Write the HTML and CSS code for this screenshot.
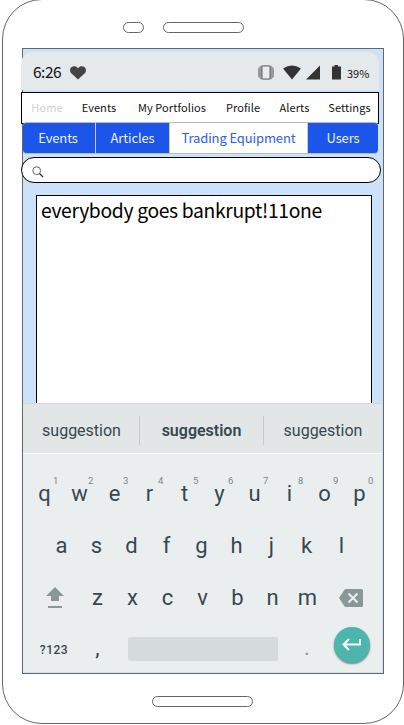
FILE: index.html
```html
<!DOCTYPE html>
<html lang="en">
<head>
<meta charset="utf-8">
<title>Trading Equipment</title>
<link rel="stylesheet" href="styles.css">
</head>
<body>
<div class="phone">
  <div class="phone-top"><span class="camera"></span><span class="speaker"></span></div>
  <main class="screen">
    <header class="status">
      <span class="clock">6:26</span>
      <svg class="heart" width="16" height="14" viewBox="0 0 16 14"><path fill="#444" d="M8 13.500 1.500 7.600C-.5 5.500-.2 2.500 1.300 1.200 3.200-.4 6.300-.2 8 2.200 9.700-.2 12.800-.4 14.700 1.200 16.200 2.500 16.500 5.500 14.500 7.600Z"/></svg>
      <svg class="icons" width="90" height="18" viewBox="0 0 90 18">
        <path fill="#999" d="M3 1.500h10l3 3v8l-3 3H3l-3-3v-8Z"/>
        <rect x="4" y="2" width="8" height="13" rx="1" fill="#e9ecee" stroke="#666"/>
        <path fill="#333" d="M25 4.500Q34 -1.500 43 4.500L34 15.500ZM48 15.500 62 1.500V15.500ZM74 2.500h2.500V1h3.500v1.500H83v13h-9Z"/>
      </svg>
      <span class="percent">39%</span>
    </header>
    <nav class="menu"><a class="current">Home</a><a>Events</a><a>My Portfolios</a><a>Profile</a><a>Alerts</a><a>Settings</a></nav>
    <div class="tabs"><a>Events</a><a>Articles</a><a class="selected">Trading Equipment</a><a>Users</a></div>
    <div class="search"><svg width="12" height="12" viewBox="0 0 12 12"><circle cx="4.700" cy="4.700" r="3.900" fill="none" stroke="#555" stroke-width=".9"/><path d="m7.500 7.500 3.500 3.500" stroke="#333" stroke-width="1.300"/></svg></div>
    <div class="post">everybody goes bankrupt!11one</div>
    <section class="keyboard">
      <div class="suggestions"><span>suggestion</span><b>suggestion</b><span>suggestion</span></div>
      <div class="keys">
        <div class="row first"><span>q<sup>1</sup></span><span>w<sup>2</sup></span><span>e<sup>3</sup></span><span>r<sup>4</sup></span><span>t<sup>5</sup></span><span>y<sup>6</sup></span><span>u<sup>7</sup></span><span>i<sup>8</sup></span><span>o<sup>9</sup></span><span>p<sup>0</sup></span></div>
        <div class="row second"><span>a</span><span>s</span><span>d</span><span>f</span><span>g</span><span>h</span><span>j</span><span>k</span><span>l</span></div>
        <div class="row third">
          <svg width="18" height="22" viewBox="0 0 18 22"><path fill="#8b9699" d="M9 0 18 9H13v5H5V9H0ZM2 19h14v2H2Z"/></svg>
          <span>z</span><span>x</span><span>c</span><span>v</span><span>b</span><span>n</span><span>m</span>
          <svg width="24" height="18" viewBox="0 0 24 18"><path fill="#8b9699" d="M7 0H22.500Q24 0 24 1.500V16.500Q24 18 22.500 18H7Q6 18 5.300 17L0 9 5.300 1Q6 0 7 0Z"/><path d="m9.500 4.500 9 9m0-9-9 9" stroke="#ebeeef" stroke-width="2"/></svg>
        </div>
        <div class="row fourth">
          <span class="symbols">?123</span><span class="comma">,</span><i class="space"></i><span class="dot">.</span>
          <span class="enter"><svg width="20" height="14" viewBox="0 0 20 14"><path d="M18 1V6.500H2M7 1 1.500 6.500 7 12" fill="none" stroke="#fff" stroke-width="2"/></svg></span>
        </div>
      </div>
    </section>
  </main>
  <div class="home-button"></div>
</div>
</body>
</html>
```
FILE: styles.css
```css
* { box-sizing: border-box; }
body { margin: 0; height: 725px; overflow: hidden; background: #fff; font-family: "Noto Sans CJK SC", sans-serif; color: #111; }
svg { display: block; flex: none; }
.phone { width: 402px; height: 725px; margin: -1px 0 0 2px; border: 1px solid #666; border-radius: 40px; }
.phone-top { display: flex; gap: 19px; height: 48px; padding: 22px 0 0 120px; }
.camera, .speaker { height: 11px; border: 1px solid #666; border-radius: 6px; }
.camera { width: 21px; }
.speaker { width: 81px; }
.screen { width: 362px; height: 626px; margin-left: 19px; padding-top: 3px; border: 1px solid #666; background: #cce2f9; }
.status { display: flex; width: 358px; height: 38px; margin-left: -2px; border-radius: 12px 12px 0 0; background: #e6e9eb; }
.clock { width: 48px; padding-left: 12px; font-size: 15.500px; line-height: 39px; letter-spacing: -.5px; }
.heart { margin: 14px 0 0 1px; }
.icons { margin: 12px 0 0 172px; }
.percent { margin-left: -1px; font-size: 11px; line-height: 43px; }
.menu { display: grid; grid-template-columns: 50px 54px 92px 50px 53px 57px; width: 358px; height: 32px; margin: 2px 0 0 -2px; border: 1px solid #000; background: #fff; text-align: center; font-size: 11px; line-height: 29px; letter-spacing: .08px; white-space: nowrap; }
.menu .current { color: #d0d0d0; }
.tabs { display: grid; grid-template-columns: 72px 74px 138px 71px; width: 355px; height: 32px; margin: -2px 0 0; overflow: hidden; border: solid #bbb; border-width: 1px 0; border-radius: 4px; background: #1b55e9; color: #edf2ff; text-align: center; font-size: 13px; letter-spacing: -.12px; line-height: 30px; white-space: nowrap; }
.tabs a:first-child { padding-right: 2px; }
.tabs a + a { border-left: 1px solid #ccc; }
.tabs .selected { background: #fff; color: #2c5ee8; }
.search { width: 360px; height: 26px; margin: 3px 0 0 -2px; padding: 8px 0 0 10px; border: 1px solid #000; border-radius: 13px; background: #fff; }
.post { width: 336px; height: 208px; margin: 12px 0 0 13px; padding-left: 4px; border: 1px solid #000; border-bottom: 0; background: #fff; color: #000; font-size: 19.300px; letter-spacing: -.33px; line-height: 29px; white-space: nowrap; }
.keyboard { width: 359px; height: 269px; background: #ebeeef; color: #37474f; font-family: Roboto, sans-serif; }
.suggestions { display: grid; grid-template-columns: 116px 124px 119px; align-items: center; height: 51px; border-top: 1px solid #d5d7d8; border-bottom: 1px solid #fff; background: #e3e6e7; text-align: center; font-size: 16px; line-height: 25px; }
.suggestions > * { height: 29px; margin-top: 4px; padding-top: 2px; }
.suggestions > * + * { border-left: 1px solid #c5cacc; }
.suggestions > :first-child { padding-left: 1px; }
.suggestions b { font-weight: 600; }
.keys { padding: 14px 0 0 4px; }
.row { display: grid; grid-auto-flow: column; grid-auto-columns: 35px; height: 52px; justify-content: start; align-items: center; text-align: center; font-size: 22px; line-height: 52px; }
.row span { position: relative; }
.row sup { position: absolute; left: 26px; top: 7px; font-size: 9.500px; line-height: 12px; color: #7b868b; }
.second { padding-left: 17px; }
.third { grid-template-columns: 53px repeat(7, 35px) 52px; grid-auto-flow: row; justify-items: center; }
.third svg:first-child { margin-left: 2px; }
.fourth { grid-template-columns: 53px 35px 13px 150px 58px 33px; grid-auto-flow: row; }
.fourth .symbols { padding-left: 1px; font-size: 12px; font-weight: 500; letter-spacing: .5px; }
.fourth .comma, .fourth .dot { margin-top: -4px; }
.space { grid-column: 4; height: 24px; margin-top: -2px; border-radius: 2px; background: #d5dada; }
.dot { color: #8b9699; }
.fourth .enter { display: flex; align-items: center; justify-content: center; width: 36px; height: 36px; margin: -10px 0 0 -2px; border-radius: 50%; background: #4db6ac; box-shadow: 0 1px 2px #777; }
.home-button { width: 101px; height: 11px; margin: 22px 0 0 149px; border: 1px solid #666; border-radius: 6px; }
```
